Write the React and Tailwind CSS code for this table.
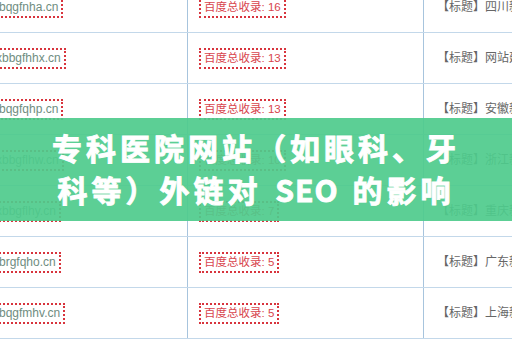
import React from 'react';

const cjk = { fontFamily: '"Liberation Sans", "Noto Sans CJK SC", sans-serif' };

// 每行：域名（左侧被裁掉一截）、收录数、标题
const rows = [
  { domain: 'xbqgfnha.cn', shift: '-ml-[12px]', count: 16, title: '【标题】四川新闻网站建设' },
  { domain: 'xbbgfhhx.cn', shift: '-ml-[9px]', count: 13, title: '【标题】网站建设公司' },
  { domain: 'xbqgfqhp.cn', shift: '-ml-[12px]', count: 13, title: '【标题】安徽新闻网站' },
  { domain: 'xbbgflhw.cn', shift: '-ml-[9px]', count: 10, title: '【标题】浙江新闻网站' },
  { domain: 'xbbgflhy.cn', shift: '-ml-[9px]', count: 7, title: '【标题】重庆新闻网站' },
  { domain: 'xbrgfqho.cn', shift: '-ml-[12px]', count: 5, title: '【标题】广东新闻网站' },
  { domain: 'xbqgfmhv.cn', shift: '-ml-[12px]', count: 5, title: '【标题】上海新闻网站' },
];

const Row = ({ row }) => (
  <div className="flex h-[51px] border-b border-[#c3d8ea]">
    <div className="w-[188px] shrink-0 flex items-center overflow-hidden border-r border-[#a7c4dd]">
      <span
        className={`${row.shift} shrink-0 border-2 border-dotted border-[#d8343d] px-[3px] py-[1px] text-[12px] leading-[15px] text-[#6f8d7f] whitespace-nowrap`}
        style={cjk}
      >
        {row.domain}
      </span>
    </div>
    <div className="w-[236px] shrink-0 flex items-center pl-[11px] border-r border-[#a7c4dd]">
      <span
        className="border-2 border-dotted border-[#d8343d] px-[3px] py-[1px] text-[11.5px] leading-[15px] text-[#d8454d] whitespace-nowrap"
        style={cjk}
      >
        百度总收录: {row.count}
      </span>
    </div>
    <div className="flex-1 flex items-center pl-[13px] overflow-hidden whitespace-nowrap text-[12px] text-[#666666]" style={cjk}>
      {row.title}
    </div>
  </div>
);

export default function App() {
  return (
    <div className="relative w-[512px] h-[340px] overflow-hidden bg-white">
      <div className="-mt-[18px]">
        {rows.map((r, i) => (
          <Row key={i} row={r} />
        ))}
      </div>

      {/* 绿色标题条 */}
      <div className="absolute left-0 right-0 top-[118px] h-[103px] bg-[#4ecb8c]/[0.92] flex items-center justify-center pb-[3px]">
        <h1
          className="text-center text-white font-bold text-[30px] leading-[42px] tracking-[4px] whitespace-nowrap [-webkit-text-stroke:0.9px_white]"
          style={{ fontFamily: '"Noto Sans CJK SC", "Noto Sans", sans-serif' }}
        >
          专科医院网站（如眼科、牙
          <br />
          科等）外链对 <span className="mx-[3px] tracking-[1px]">SEO</span> 的影响
        </h1>
      </div>
    </div>
  );
}
